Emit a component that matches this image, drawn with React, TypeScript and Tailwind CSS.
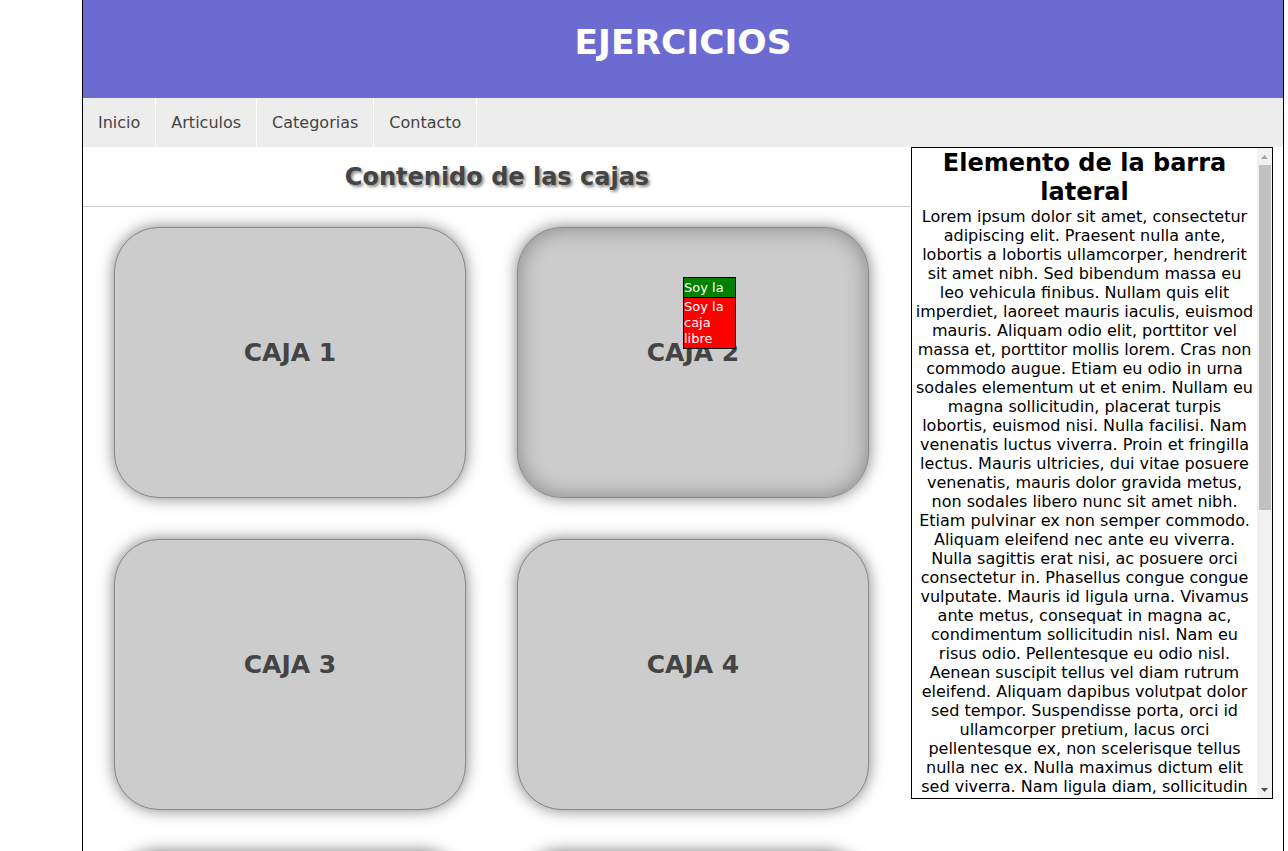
const lorem =
  "Lorem ipsum dolor sit amet, consectetur adipiscing elit. Praesent nulla ante, lobortis a lobortis ullamcorper, hendrerit sit amet nibh. Sed bibendum massa eu leo vehicula finibus. Nullam quis elit imperdiet, laoreet mauris iaculis, euismod mauris. Aliquam odio elit, porttitor vel massa et, porttitor mollis lorem. Cras non commodo augue. Etiam eu odio in urna sodales elementum ut et enim. Nullam eu magna sollicitudin, placerat turpis lobortis, euismod nisi. Nulla facilisi. Nam venenatis luctus viverra. Proin et fringilla lectus. Mauris ultricies, dui vitae posuere venenatis, mauris dolor gravida metus, non sodales libero nunc sit amet nibh. Etiam pulvinar ex non semper commodo. Aliquam eleifend nec ante eu viverra. Nulla sagittis erat nisi, ac posuere orci consectetur in. Phasellus congue congue vulputate. Mauris id ligula urna. Vivamus ante metus, consequat in magna ac, condimentum sollicitudin nisl. Nam eu risus odio. Pellentesque eu odio nisl. Aenean suscipit tellus vel diam rutrum eleifend. Aliquam dapibus volutpat dolor sed tempor. Suspendisse porta, orci id ullamcorper pretium, lacus orci pellentesque ex, non scelerisque tellus nulla nec ex. Nulla maximus dictum elit sed viverra. Nam ligula diam, sollicitudin at justo et, aliquet fermentum nunc. Donec vel ipsum ac lectus tincidunt faucibus. Integer sit amet mi sed augue volutpat pharetra. Vestibulum ante ipsum primis in faucibus orci luctus et ultrices posuere cubilia curae; Curabitur sed est at nibh tempus laoreet. Morbi a libero id odio sagittis tristique. Duis eget feugiat leo, non dignissim nisl. Quisque vulputate tortor vitae arcu pulvinar, a consequat purus dapibus. In hac habitasse platea dictumst. Fusce efficitur sem et eros suscipit, vitae viverra magna gravida. Sed ut dolor sed turpis vehicula fermentum.";

const navItems = ["Inicio", "Articulos", "Categorias", "Contacto"];

function Caja({ label, hovered }: { label: string; hovered?: boolean }) {
  return (
    <div
      className={
        hovered
          ? "relative h-[271px] rounded-[45px] border border-[#888] bg-[#ccc] flex items-center justify-center pb-[19px] shadow-[0_0_15px_rgba(0,0,0,0.5),inset_0_0_22px_rgba(0,0,0,0.35)]"
          : "relative h-[271px] rounded-[45px] border border-[#888] bg-[#ccc] flex items-center justify-center pb-[19px] shadow-[0_0_15px_rgba(0,0,0,0.5)]"
      }
    >
      <span className="text-[25px] font-bold text-[#444] leading-[28px]">{label}</span>
      {hovered && (
        <div className="absolute left-[165px] top-[49px] w-[53px] border border-black text-white text-[13px] text-left">
          <div className="bg-[#008000] leading-[17px] py-[1px] border-b border-black">Soy la</div>
          <div className="bg-[#ff0000] leading-[16px] py-[1px]">
            Soy la caja libre
          </div>
        </div>
      )}
    </div>
  );
}

// barra de desplazamiento dibujada (el navegador sin cabeza no la pinta)
function ScrollBar() {
  return (
    <div className="w-[15px] h-full bg-[#f1f1f1] flex flex-col items-center">
      <div className="h-[17px] flex items-center justify-center">
        <svg width="7" height="4" viewBox="0 0 7 4">
          <path d="M0 4 L3.5 0 L7 4 Z" fill="#a3a3a3" />
        </svg>
      </div>
      <div className="w-[12px] h-[345px] bg-[#c1c1c1]" />
      <div className="flex-1" />
      <div className="h-[17px] flex items-center justify-center">
        <svg width="7" height="4" viewBox="0 0 7 4">
          <path d="M0 0 L3.5 4 L7 0 Z" fill="#505050" />
        </svg>
      </div>
    </div>
  );
}

export default function App() {
  return (
    <div
      className="h-[851px] overflow-hidden bg-white"
      style={{ fontFamily: '"DejaVu Sans", Verdana, sans-serif' }}
    >
      <div className="ml-[82px] w-[1202px] h-full border-x border-black">
        {/* Cabecera */}
        <header className="h-[98px] bg-[#6c6bd1] flex items-center justify-center pb-[12px]">
          <h1 className="text-[34.5px] font-bold text-white">EJERCICIOS</h1>
        </header>

        {/* Menu */}
        <nav className="h-[49px] bg-[#ededed] flex">
          {navItems.map((item) => (
            <a
              key={item}
              className="px-[15px] pt-[1px] flex items-center border-r border-white text-[16px] text-[#444]"
            >
              {item}
            </a>
          ))}
        </nav>

        <div className="flex">
          {/* Contenido */}
          <main className="flex-1">
            <div className="h-[60px] border-b border-[#ccc] flex items-center justify-center">
              <h2 className="text-[24px] font-bold text-[#444] [text-shadow:2px_2px_3px_rgba(0,0,0,0.45)]">
                Contenido de las cajas
              </h2>
            </div>
            <div className="pl-[31px] pt-[20px] grid grid-cols-[352px_352px] gap-x-[51px] gap-y-[41px]">
              <Caja label="CAJA 1" />
              <Caja label="CAJA 2" hovered />
              <Caja label="CAJA 3" />
              <Caja label="CAJA 4" />
              <Caja label="CAJA 5" />
              <Caja label="CAJA 6" />
            </div>
          </main>

          {/* Barra lateral */}
          <aside className="w-[362px] h-[652px] mr-[10px] border border-black overflow-hidden flex text-black">
            <div className="flex-1 overflow-hidden text-center pt-[1px]">
              <h2 className="text-[24px] font-bold leading-[29px]">Elemento de la barra lateral</h2>
              <p className="text-[16px] leading-[19px] px-[2px]">{lorem}</p>
            </div>
            <ScrollBar />
          </aside>
        </div>
      </div>
    </div>
  );
}
